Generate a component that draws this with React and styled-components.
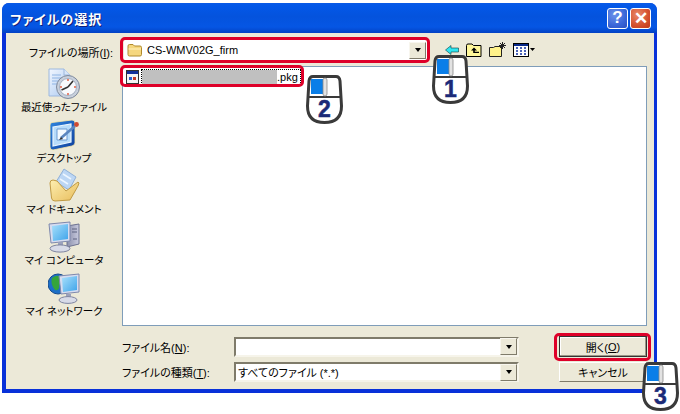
import React from "react";
import styled, { createGlobalStyle } from "styled-components";

const Global = createGlobalStyle`
  html, body { margin: 0; padding: 0; background: #fff; }
  body {
    font-family: "Liberation Sans", "Noto Sans CJK JP", sans-serif;
    font-size: 11px;
    font-feature-settings: "palt";
    color: #000;
  }
`;

const Page = styled.div`
  position: relative;
  width: 680px;
  height: 414px;
  overflow: hidden;
  padding: 3px 0 0 2px;
  box-sizing: border-box;
`;

const Window = styled.div`
  width: 655px;
  height: 390px;
  display: flex;
  flex-direction: column;
  border-radius: 7px 7px 0 0;
  background: #0831d9;
  box-sizing: border-box;
  padding: 0 3px 4px 4px;
`;

const TitleBar = styled.div`
  height: 30px;
  margin: 0 -3px 0 -4px;
  padding: 0 6px 0 8px;
  display: flex;
  align-items: center;
  justify-content: space-between;
  border-radius: 7px 7px 0 0;
  background: linear-gradient(180deg, #0a5ae6 0%, #0358e8 10%, #0453dd 45%, #0556e4 80%, #0342c4 100%);
`;

const Title = styled.div`
  color: #fff;
  font-size: 13px;
  letter-spacing: 1px;
  font-weight: 700;
  text-shadow: 1px 1px 0 #0f1f7a;
`;

const Caption = styled.div`
  display: flex;
  gap: 2px;
`;

const CaptionButton = styled.div`
  width: 21px;
  height: 21px;
  box-sizing: border-box;
  border: 1px solid #fff;
  border-radius: 3px;
  color: #fff;
  display: flex;
  align-items: center;
  justify-content: center;
  font-size: 17px;
  font-weight: 700;
  background: ${(p) =>
    p.$close
      ? "radial-gradient(circle at 35% 30%, #e98a6a, #d4502e 60%, #c03a18)"
      : "radial-gradient(circle at 35% 30%, #6c93ea, #3a66d8 60%, #2a50c0)"};
`;

const Client = styled.div`
  flex: 1;
  background: #ece9d8;
  display: grid;
  grid-template-columns: 116px 525px;
  grid-template-rows: 33px 260px 1fr;
`;

const LocationLabel = styled.div`
  justify-self: end;
  padding: 11px 9px 0 0;
  white-space: nowrap;
  font-size: 11px;
`;

const TopRow = styled.div`
  display: flex;
  align-items: flex-start;
  padding: 7px 0 0 2px;
`;

const Combo = styled.div`
  width: ${(p) => p.$w}px;
  height: 20px;
  box-sizing: border-box;
  background: #fff;
  display: flex;
  align-items: center;
  justify-content: space-between;
  font-size: 11px;
  white-space: nowrap;
  padding-left: 2px;
  ${(p) =>
    p.$sunken &&
    `border: 2px solid; border-color: #7f7b6a #f6f4ea #f6f4ea #7f7b6a;`}
`;

const ComboValue = styled.div`
  display: flex;
  align-items: center;
  gap: 4px;
  padding-left: 1px;
`;

const DropButton = styled.div`
  width: 17px;
  height: 17px;
  flex: none;
  margin-right: ${(p) => (p.$flush ? 0 : "1px")};
  box-sizing: border-box;
  background: #ece9d8;
  border: 1px solid;
  border-color: #f8f6ee #7f7b6a #7f7b6a #f8f6ee;
  display: flex;
  align-items: center;
  justify-content: center;
  &::after {
    content: "";
    border: 3.5px solid transparent;
    border-top: 4px solid #000;
    border-bottom: 0;
  }
`;

const Tools = styled.div`
  display: flex;
  align-items: center;
  gap: 7px;
  margin: 2px 0 0 18px;
`;

const Sidebar = styled.div`
  grid-row: 2 / 4;
  display: flex;
  flex-direction: column;
  align-items: center;
  margin-top: -3px;
`;

const Place = styled.div`
  height: 51px;
  width: 100%;
  display: flex;
  flex-direction: column;
  align-items: center;
  justify-content: flex-end;
  white-space: nowrap;
  font-size: 10.5px;
  line-height: 13px;
  gap: 1px;
`;

const FileList = styled.div`
  background: #fff;
  border: 1px solid #7f9db9;
  box-sizing: border-box;
  padding: 2px 0 0 3px;
`;

const FileRow = styled.div`
  display: flex;
  align-items: center;
  gap: 2px;
`;

const FileName = styled.div`
  display: flex;
  align-items: center;
  width: 160px;
  height: 16px;
  box-sizing: border-box;
  border: 1px dotted #000;
  font-size: 11px;
`;

const Blurred = styled.div`
  width: 135px;
  height: 14px;
  background: #c0c0c0;
`;

const Form = styled.div`
  display: grid;
  grid-template-columns: 112px 285px 88px;
  grid-template-rows: 21px 20px;
  row-gap: 5px;
  padding-top: 10px;
  align-items: center;
  font-size: 11px;
`;

const FieldLabel = styled.div`
  white-space: nowrap;
`;

const Button = styled.div`
  width: 88px;
  height: ${(p) => p.$h}px;
  margin-left: 40px;
  box-sizing: border-box;
  display: flex;
  align-items: center;
  justify-content: center;
  background: #ece9d8;
  font-size: 11px;
  border: 1px solid;
  border-color: #fff #7f7b6a #7f7b6a #fff;
  ${(p) => p.$default && "outline: 1px solid #333; outline-offset: -1px; box-shadow: inset -1px -1px 0 #9a9686, inset 1px 1px 0 #fff;"}
`;

const Mark = styled.span`
  text-decoration: underline;
`;

const Highlight = styled.div`
  position: absolute;
  left: ${(p) => p.$x}px;
  top: ${(p) => p.$y}px;
  width: ${(p) => p.$w}px;
  height: ${(p) => p.$h}px;
  box-sizing: border-box;
  border: 3px solid #de0029;
  border-radius: 5px;
`;

const MouseWrap = styled.div`
  position: absolute;
  left: ${(p) => p.$x}px;
  top: ${(p) => p.$y}px;
  width: 37px;
  height: 49px;
`;

function Mouse({ n, x, y }) {
  return (
    <MouseWrap $x={x} $y={y}>
      <svg width="37" height="49" viewBox="0 0 37 49">
        <path d="M7 1.5 H30 Q33.5 1.5 34 6 L35.5 31 Q35.5 47.5 18.5 47.5 Q1.5 47.5 1.5 31 L3 6 Q3.5 1.5 7 1.5 Z" fill="#fff" stroke="#3a3a3a" strokeWidth="3" />
        <rect x="5" y="4" width="12" height="15" fill="#0a7ee8" />
        <path d="M2.5 22 H34.5" stroke="#3a3a3a" strokeWidth="2" />
        <rect x="17" y="3" width="4" height="18" rx="2" fill="#e2e2e2" stroke="#888" strokeWidth="0.8" />
        <text x="18.5" y="42" textAnchor="middle" fontFamily="Liberation Sans, sans-serif" fontWeight="700" fontSize="23" fill="#1b2a78" stroke="#1b2a78" strokeWidth="0.5">{n}</text>
      </svg>
    </MouseWrap>
  );
}

const FolderIcon = () => (
  <svg width="16" height="14" viewBox="0 0 16 14">
    <path d="M1 3 Q1 1.5 2.5 1.5 H6 L7.5 3 H13 Q14.5 3 14.5 4.5 V11.5 Q14.5 13 13 13 H2.5 Q1 13 1 11.5 Z" fill="#f5d77e" stroke="#b08a2c" />
    <path d="M1.5 6 H14" stroke="#fff2bf" />
  </svg>
);

const BackIcon = () => (
  <svg width="14" height="10" viewBox="0 0 14 10">
    <path d="M0.5 5 L6 0.5 V3 H13.5 V7 H6 V9.5 Z" fill="#2fe6f0" stroke="#063c40" strokeWidth="0.6" />
  </svg>
);

const UpIcon = () => (
  <svg width="16" height="14" viewBox="0 0 16 14">
    <path d="M0.5 2.5 Q0.5 1 2 1 H6 L7.5 2.5 H15 V13.5 H0.5 Z" fill="#fff79a" stroke="#000" />
    <path d="M8 4.5 L5 7.5 H7.2 V10 H13 V8.8 H8.8 V7.5 H11 Z" fill="#000" />
  </svg>
);

const NewFolderIcon = () => (
  <svg width="17" height="15" viewBox="0 0 17 15">
    <path d="M0.5 5.5 H4.5 L6 4.5 H12.5 V14.5 H0.5 Z" fill="#fff28a" stroke="#222" />
    <path d="M13.5 0 V7 M10 3.5 H17 M11 1 L16 6 M16 1 L11 6" stroke="#222" strokeWidth="1" />
  </svg>
);

const ViewsIcon = () => (
  <svg width="22" height="14" viewBox="0 0 22 14">
    <rect x="0.5" y="0.5" width="15" height="13" fill="#fff" stroke="#000" />
    <rect x="1" y="1" width="14" height="2" fill="#0a2a8a" />
    <path d="M3 5 h2 M7 5 h2 M11 5 h2 M3 8 h2 M7 8 h2 M11 8 h2 M3 11 h2 M7 11 h2 M11 11 h2" stroke="#1030a0" strokeWidth="1.4" />
    <path d="M17 5 H22 L19.5 8 Z" fill="#000" />
  </svg>
);

const PkgIcon = () => (
  <svg width="13" height="14" viewBox="0 0 13 14">
    <rect x="0.5" y="0.5" width="12" height="13" fill="#f4f4f4" stroke="#333" />
    <rect x="1" y="1" width="11" height="3" fill="#12309a" />
    <rect x="3" y="7" width="3" height="3" fill="#2a62d0" />
    <rect x="7" y="7" width="3" height="3" fill="#c03a2a" />
  </svg>
);

const RecentIcon = () => (
  <svg width="32" height="32" viewBox="0 0 32 32">
    <defs>
      <linearGradient id="recentDoc" x1="0" y1="0" x2="1" y2="1">
        <stop offset="0" stopColor="#f2f7ff" />
        <stop offset="1" stopColor="#a9c8f0" />
      </linearGradient>
    </defs>
    <path d="M1 1 H16 L22 7 V28 H1 Z" fill="url(#recentDoc)" stroke="#9db8de" />
    <path d="M16 1 V7 H22" fill="#d8e6f8" stroke="#9db8de" />
    <path d="M4 7 H13 M4 10 H15 M4 13 H11 M4 16 H10" stroke="#8fb4e4" />
    <circle cx="20" cy="19" r="11.5" fill="#c8d0dc" stroke="#7f8a9c" />
    <circle cx="20" cy="19" r="8.5" fill="#f8fafd" stroke="#a5b0c2" />
    <path d="M20 19 L13.5 22 M20 19 L25 13" stroke="#333" strokeWidth="1.6" />
    <circle cx="20" cy="12" r="0.9" fill="#e05030" />
    <circle cx="27" cy="19" r="0.9" fill="#e05030" />
    <circle cx="20" cy="26" r="0.9" fill="#e05030" />
    <circle cx="13" cy="19" r="0.9" fill="#e05030" />
  </svg>
);

const DesktopIcon = () => (
  <svg width="32" height="32" viewBox="0 0 32 32">
    <defs>
      <linearGradient id="desktopTile" x1="0" y1="0" x2="1" y2="1">
        <stop offset="0" stopColor="#2f86e0" />
        <stop offset="1" stopColor="#0f3f9c" />
      </linearGradient>
    </defs>
    <path d="M2 6 Q2 4 4 3.5 L24 1 Q27 1 27 4 V24 Q27 26 24 27 L5 31 Q2 31 2 28 Z" fill="url(#desktopTile)" stroke="#fbe9a8" strokeWidth="0.8" />
    <path d="M5 8 L23 5 V23 L5 27 Z" fill="#b8dcfa" stroke="#eaf6ff" strokeWidth="1.2" />
    <path d="M9 10 H19 V21 H9 Z" fill="#f4faff" stroke="#6b9bd4" />
    <path d="M13 19 L27 7" stroke="#5a86c0" strokeWidth="2.6" />
    <path d="M11 21 L13 18 L15 20 Z" fill="#333" />
    <circle cx="28.5" cy="5.5" r="2.4" fill="#cf4a30" />
  </svg>
);

const DocsIcon = () => (
  <svg width="32" height="34" viewBox="0 0 32 34">
    <defs>
      <linearGradient id="docsFolder" x1="0" y1="0" x2="1" y2="1">
        <stop offset="0" stopColor="#fdeeb0" />
        <stop offset="1" stopColor="#e8bd5c" />
      </linearGradient>
    </defs>
    <path d="M16 1 L28 9 L21 22 L8 14 Z" fill="#bcd6f4" stroke="#8fb0d8" />
    <path d="M15 6 L23 11 M12 11 L20 16" stroke="#eef6ff" strokeWidth="1.5" />
    <path d="M2 15 Q2 12 5 12 L9 13 L18 23 L30 14 Q32 14 30 18 L22 32 L7 33 Q4 33 3.5 30 Z" fill="url(#docsFolder)" stroke="#c09a44" />
  </svg>
);

const ComputerIcon = () => (
  <svg width="32" height="32" viewBox="0 0 32 32">
    <defs>
      <linearGradient id="compTower" x1="0" y1="0" x2="1" y2="0">
        <stop offset="0" stopColor="#8c90ac" />
        <stop offset="1" stopColor="#c8cade" />
      </linearGradient>
      <linearGradient id="compScreen" x1="0" y1="0" x2="1" y2="1">
        <stop offset="0" stopColor="#a8e0fb" />
        <stop offset="1" stopColor="#3fa4ea" />
      </linearGradient>
    </defs>
    <path d="M19 5 L31 3 V23 L19 26 Z" fill="url(#compTower)" stroke="#6d7290" />
    <path d="M24 8 H29 M24 11 H29 M25 18 H29" stroke="#5d6280" />
    <path d="M1 3 L22 1 V20 L3 22 Z" fill="#d6dcf0" stroke="#7e88ac" />
    <path d="M4 5 L20 3 V18 L5 20 Z" fill="url(#compScreen)" />
    <path d="M10 21 H15 V25 H10 Z" fill="#9ba1bc" />
    <ellipse cx="12" cy="27.5" rx="10" ry="3.6" fill="#d8dbe8" stroke="#7e84a0" />
  </svg>
);

const NetworkIcon = () => (
  <svg width="32" height="32" viewBox="0 0 32 32">
    <defs>
      <linearGradient id="netScreen" x1="0" y1="0" x2="1" y2="1">
        <stop offset="0" stopColor="#a8e0fb" />
        <stop offset="1" stopColor="#3fa4ea" />
      </linearGradient>
    </defs>
    <circle cx="10" cy="12" r="10" fill="#1d6fc8" stroke="#134b8d" />
    <path d="M4 6 Q9 2 13 5 Q15 10 11 13 Q12 19 7 18 Q2 12 4 6 Z" fill="#35a53a" />
    <path d="M11 4 L31 2 V20 L13 22 Z" fill="#d6dcf0" stroke="#7e88ac" />
    <path d="M14 6 L29 4 V18 L15 20 Z" fill="url(#netScreen)" />
    <path d="M18 22 H23 V26 H18 Z" fill="#9ba1bc" />
    <ellipse cx="20" cy="28" rx="9" ry="3.4" fill="#d8dbe8" stroke="#7e84a0" />
  </svg>
);

const places = [
  { label: "最近使ったファイル", Icon: RecentIcon },
  { label: "デスクトップ", Icon: DesktopIcon },
  { label: "マイ ドキュメント", Icon: DocsIcon },
  { label: "マイ コンピュータ", Icon: ComputerIcon },
  { label: "マイ ネットワーク", Icon: NetworkIcon },
];

export default function App() {
  return (
    <>
      <Global />
      <Page>
        <Window>
          <TitleBar>
            <Title>ファイルの選択</Title>
            <Caption>
              <CaptionButton>?</CaptionButton>
              <CaptionButton $close>✕</CaptionButton>
            </Caption>
          </TitleBar>
          <Client>
            <LocationLabel>
              ファイルの場所(<Mark>I</Mark>):
            </LocationLabel>
            <TopRow>
              <Combo $w={303}>
                <ComboValue>
                  <FolderIcon />
                  CS-WMV02G_firm
                </ComboValue>
                <DropButton />
              </Combo>
              <Tools>
                <BackIcon />
                <UpIcon />
                <NewFolderIcon />
                <ViewsIcon />
              </Tools>
            </TopRow>
            <Sidebar>
              {places.map(({ label, Icon }) => (
                <Place key={label}>
                  <Icon />
                  {label}
                </Place>
              ))}
            </Sidebar>
            <FileList>
              <FileRow>
                <PkgIcon />
                <FileName>
                  <Blurred />
                  .pkg
                </FileName>
              </FileRow>
            </FileList>
            <Form>
              <FieldLabel>
                ファイル名(<Mark>N</Mark>):
              </FieldLabel>
              <Combo $w={285} $sunken>
                <span />
                <DropButton $flush />
              </Combo>
              <Button $h={21} $default>
                開く(<Mark>O</Mark>)
              </Button>
              <FieldLabel>
                ファイルの種類(<Mark>T</Mark>):
              </FieldLabel>
              <Combo $w={285} $sunken>
                <span>すべてのファイル (*.*)</span>
                <DropButton $flush />
              </Combo>
              <Button $h={20}>キャンセル</Button>
            </Form>
          </Client>
        </Window>
        <Highlight $x={120} $y={37} $w={310} $h={26} />
        <Highlight $x={120} $y={65} $w={184} $h={22} />
        <Highlight $x={554} $y={333} $w={97} $h={28} />
        <Mouse n="1" x={432} y={55} />
        <Mouse n="2" x={306} y={75} />
        <Mouse n="3" x={642} y={362} />
      </Page>
    </>
  );
}
